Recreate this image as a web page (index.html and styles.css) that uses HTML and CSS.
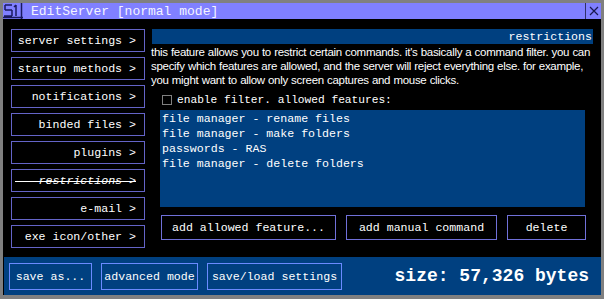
FILE: index.html
```html
<!DOCTYPE html>
<html lang="en">
<head>
    <meta charset="UTF-8">
    <title>EditServer</title>
    <link rel="stylesheet" href="styles.css">
</head>
<body>

    <div class="window">
        <div class="titlebar">
            <svg class="app-icon" width="20" height="16" viewBox="0 0 20 16">
                <path d="M2 2h7M2 2v5M2 7h7M9 7v6M1 13h8M13 2v11M11 4l2-2M0 14.5h20M18.5 0v16" stroke="#1a1a60" stroke-width="1.5" fill="none"/>
            </svg>
            <span class="title">EditServer [normal mode]</span>
            <span class="close">
                <svg width="10" height="10" viewBox="0 0 10 10">
                    <path d="M1 1l8 8M9 1l-8 8" stroke="#1a1a50" stroke-width="1.2"/>
                </svg>
            </span>
        </div>

        <div class="main">
            <div class="nav">
                <div class="nav-btn">server settings &gt;</div>
                <div class="nav-btn">startup methods &gt;</div>
                <div class="nav-btn">notifications &gt;</div>
                <div class="nav-btn">binded files &gt;</div>
                <div class="nav-btn">plugins &gt;</div>
                <div class="nav-btn current">restrictions &gt;</div>
                <div class="nav-btn">e-mail &gt;</div>
                <div class="nav-btn">exe icon/other &gt;</div>
            </div>

            <div class="content">
                <div class="section-head">restrictions</div>
                <p class="desc">this feature allows you to restrict certain commands. it's basically a command filter. you can specify which features are allowed, and the server will reject everything else. for example, you might want to allow only screen captures and mouse clicks.</p>

                <label class="check-row">
                    <span class="checkbox"></span>
                    <span>enable filter. allowed features:</span>
                </label>

                <div class="feature-list">
                    <div>file manager - rename files</div>
                    <div>file manager - make folders</div>
                    <div>passwords - RAS</div>
                    <div>file manager - delete folders</div>
                </div>

                <div class="actions">
                    <div class="btn btn-add">add allowed feature...</div>
                    <div class="btn btn-manual">add manual command</div>
                    <div class="btn btn-delete">delete</div>
                </div>
            </div>
        </div>

        <div class="footer">
            <div class="foot-btn save-as">save as...</div>
            <div class="foot-btn advanced">advanced mode</div>
            <div class="foot-btn save-load">save/load settings</div>
            <div class="size">size: 57,326 bytes</div>
        </div>
    </div>

</body>
</html>
```

FILE: styles.css
```css
body {
    margin: 0;
    padding: 0;
    background-color: #808080;
}

.window {
    width: 604px;
    height: 299px;
    box-sizing: border-box;
    border: 3px solid #808080;
    border-bottom-width: 4px;
    background-color: #000;
    display: flex;
    flex-direction: column;
    font-family: 'Liberation Mono', 'Courier New', monospace;
    color: #fff;
}

/* Title bar */
.titlebar {
    height: 16px;
    flex-shrink: 0;
    background-color: #8080ff;
    border-bottom: 1px solid #000;
    display: flex;
    align-items: center;
}

.app-icon {
    display: block;
    margin-left: 0;
}

.title {
    margin-left: 8px;
    font-size: 13px;
    color: #f4f4ff;
}

.close {
    margin-left: auto;
    width: 16px;
    height: 16px;
    box-sizing: border-box;
    border-left: 1px solid #30306a;
    display: flex;
    align-items: center;
    justify-content: center;
}

/* Main area */
.main {
    flex: 1;
    display: flex;
    padding: 9px 8px 0 8px;
}

.nav {
    width: 134px;
    flex-shrink: 0;
    display: flex;
    flex-direction: column;
    gap: 5px;
}

.nav-btn {
    height: 23px;
    box-sizing: border-box;
    border: 1px solid #6464c8;
    text-align: right;
    padding-right: 8px;
    line-height: 21px;
    font-size: 11.6px;
}

.nav-btn.current {
    font-style: italic;
    background: linear-gradient(#fff, #fff) 3px 11px / 121px 1px no-repeat;
}

.content {
    flex: 1;
    margin-left: 7px;
}

.section-head {
    height: 15px;
    background-color: #004080;
    text-align: right;
    padding-right: 1px;
    font-size: 11.6px;
    line-height: 15px;
}

.desc {
    margin: 1px -2px 0 -1px;
    font-family: 'Liberation Sans', Arial, sans-serif;
    font-size: 11.5px;
    letter-spacing: -0.3px;
    word-spacing: 0.3px;
    line-height: 14px;
}

.check-row {
    display: flex;
    align-items: center;
    margin-top: 7px;
    padding-left: 10px;
    font-size: 11.2px;
    height: 12px;
}

.checkbox {
    width: 10px;
    height: 10px;
    box-sizing: border-box;
    border: 1px solid #808080;
    margin-right: 5px;
}

.feature-list {
    margin: 4px 8px 0 8px;
    height: 97px;
    box-sizing: border-box;
    background-color: #004080;
    padding: 1px 2px;
    font-size: 11.6px;
    line-height: 15px;
}

.actions {
    display: flex;
    gap: 10px;
    margin-top: 8px;
    padding-left: 9px;
}

.btn {
    height: 25px;
    box-sizing: border-box;
    border: 1px solid #7070d8;
    font-size: 11.6px;
    line-height: 23px;
    text-align: center;
}

.btn-add {
    width: 175px;
}

.btn-manual {
    width: 151px;
}

.btn-delete {
    width: 79px;
}

/* Bottom bar */
.footer {
    height: 38px;
    flex-shrink: 0;
    background-color: #004080;
    margin-left: 1px;
    display: flex;
    align-items: center;
    gap: 9px;
    padding: 0 12px 0 5px;
}

.foot-btn {
    height: 27px;
    box-sizing: border-box;
    border: 1px solid #6a8aff;
    font-size: 11.6px;
    line-height: 25px;
    text-align: center;
}

.save-as {
    width: 83px;
}

.advanced {
    width: 97px;
}

.save-load {
    width: 135px;
}

.size {
    margin-left: auto;
    font-size: 18px;
    font-weight: bold;
}
```
